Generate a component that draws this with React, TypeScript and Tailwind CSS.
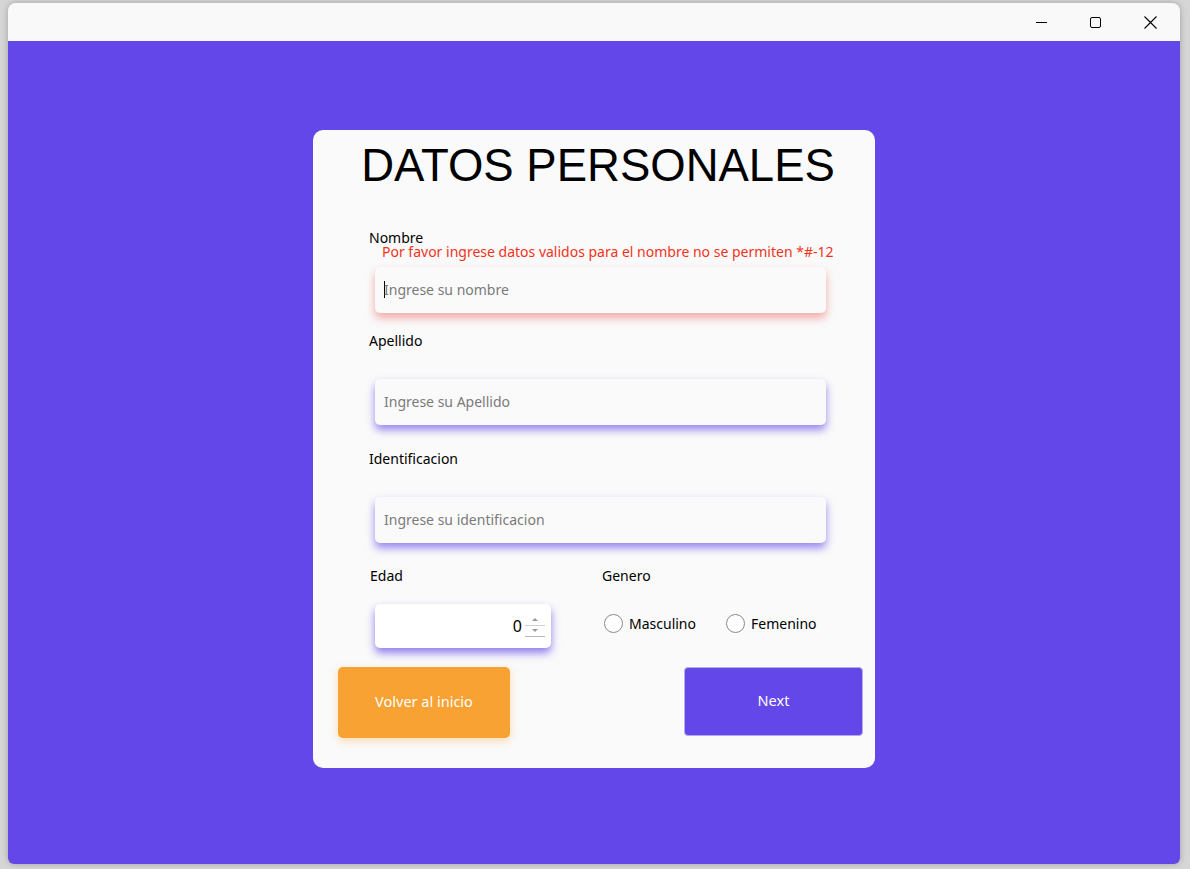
import { useState } from "react";

const ui = { fontFamily: '"Noto Sans", "Open Sans", sans-serif' };

const Field = ({
  label,
  placeholder,
  error,
}: {
  label: string;
  placeholder: string;
  error?: string;
}) => (
  <div className="flex flex-col">
    <label className="text-[14px] text-black leading-[14px] pl-[56px]">{label}</label>
    {error ? (
      <p className="text-[14px] text-[#f2331c] leading-[14px] pl-[69px] mb-[8px] whitespace-nowrap">
        {error}
      </p>
    ) : (
      <div className="h-[31px]" />
    )}
    <div
      className={`ml-[62px] mr-[49px] h-[46px] rounded-[5px] bg-[#fafafa] flex items-center pl-[9px] ${
        error
          ? "shadow-[0_5px_8px_rgba(238,90,90,0.5)]"
          : "shadow-[0_5px_8px_rgba(99,71,232,0.65)]"
      }`}
    >
      {error && <span className="w-px h-[17px] bg-black -mr-px" />}
      <input
        placeholder={placeholder}
        className="bg-transparent outline-none text-[14px] text-black placeholder:text-[#7a7a7a] w-full"
        style={ui}
      />
    </div>
  </div>
);

const Radio = ({ label, checked, onClick }: { label: string; checked: boolean; onClick: () => void }) => (
  <button onClick={onClick} className="flex items-center gap-[6px] text-[14px] leading-[20px] text-black">
    <span className="w-[19px] h-[19px] rounded-full border border-[#8a8a8a] bg-white flex items-center justify-center">
      {checked && <span className="w-[9px] h-[9px] rounded-full bg-black" />}
    </span>
    {label}
  </button>
);

export default function App() {
  const [genero, setGenero] = useState("");

  return (
    <div className="w-[1190px] h-[869px] bg-[#d6d6d6] overflow-hidden pl-[8px] pt-[3px]" style={ui}>
      <div className="w-[1172px] h-[861px] rounded-t-[8px] rounded-b-[6px] overflow-hidden flex flex-col shadow-[0_0_6px_rgba(0,0,0,0.25)]">
        {/* title bar */}
        <div className="h-[38px] bg-[#f9f9f9] flex justify-end items-center shrink-0">
          <div className="w-[50px] flex justify-center">
            <span className="w-[11px] h-px bg-black" />
          </div>
          <div className="w-[58px] flex justify-center">
            <span className="w-[11px] h-[11px] border border-black rounded-[2px]" />
          </div>
          <div className="w-[52px] flex justify-center mr-[4px]">
            <svg width="13" height="13" viewBox="0 0 13 13">
              <path d="M0.5 0.5 L12.5 12.5 M12.5 0.5 L0.5 12.5" stroke="#000" strokeWidth="1.1" />
            </svg>
          </div>
        </div>

        {/* content */}
        <div className="flex-1 bg-[#6347e8] flex justify-center pt-[89px]">
          <div className="w-[562px] h-[638px] bg-[#fafafa] rounded-[10px] flex flex-col">
            <h1
              className="text-center text-[45.5px] leading-none text-black mt-[13px] ml-[8px]"
              style={{ fontFamily: '"Liberation Sans", Arial, sans-serif' }}
            >
              DATOS PERSONALES
            </h1>

            <div className="flex flex-col mt-[42px]">
              <Field
                label="Nombre"
                placeholder="Ingrese su nombre"
                error="Por favor ingrese datos validos para el nombre no se permiten *#-12"
              />
              <div className="mt-[21px]">
                <Field label="Apellido" placeholder="Ingrese su Apellido" />
              </div>
              <div className="mt-[27px]">
                <Field label="Identificacion" placeholder="Ingrese su identificacion" />
              </div>
            </div>

            <div className="flex mt-[26px]">
              <div className="flex flex-col w-[289px]">
                <span className="text-[14px] leading-[14px] pl-[57px]">Edad</span>
                <div className="ml-[62px] mt-[21px] w-[176px] h-[44px] rounded-[5px] bg-white shadow-[0_5px_8px_rgba(99,71,232,0.7)] flex items-center justify-end pr-[6px] gap-[3px]">
                  <span className="text-[16px] text-black">0</span>
                  <div className="flex flex-col w-[20px] h-[22px] border-b border-[#b5b5b5]">
                    <div className="flex-1 flex items-center justify-center border-b border-[#cfcfcf]">
                      <span className="w-0 h-0 border-l-[3px] border-r-[3px] border-b-[3px] border-l-transparent border-r-transparent border-b-[#9a9a9a]" />
                    </div>
                    <div className="flex-1 flex items-center justify-center">
                      <span className="w-0 h-0 border-l-[3px] border-r-[3px] border-t-[3px] border-l-transparent border-r-transparent border-t-[#9a9a9a]" />
                    </div>
                  </div>
                </div>
              </div>
              <div className="flex flex-col">
                <span className="text-[14px] leading-[14px]">Genero</span>
                <div className="flex gap-[30px] mt-[31px] ml-[2px]">
                  <Radio label="Masculino" checked={genero === "m"} onClick={() => setGenero("m")} />
                  <Radio label="Femenino" checked={genero === "f"} onClick={() => setGenero("f")} />
                </div>
              </div>
            </div>

            <div className="flex justify-between mt-[19px] pl-[25px] pr-[12px]">
              <button className="w-[172px] h-[71px] rounded-[5px] bg-[#f7a233] text-white text-[14.5px] shadow-[0_3px_8px_rgba(247,162,51,0.35)]">
                Volver al inicio
              </button>
              <button className="w-[179px] h-[69px] rounded-[4px] bg-[#6347e8] border border-[#b4aaf2] text-white text-[14.5px]">
                Next
              </button>
            </div>
          </div>
        </div>
      </div>
    </div>
  );
}
